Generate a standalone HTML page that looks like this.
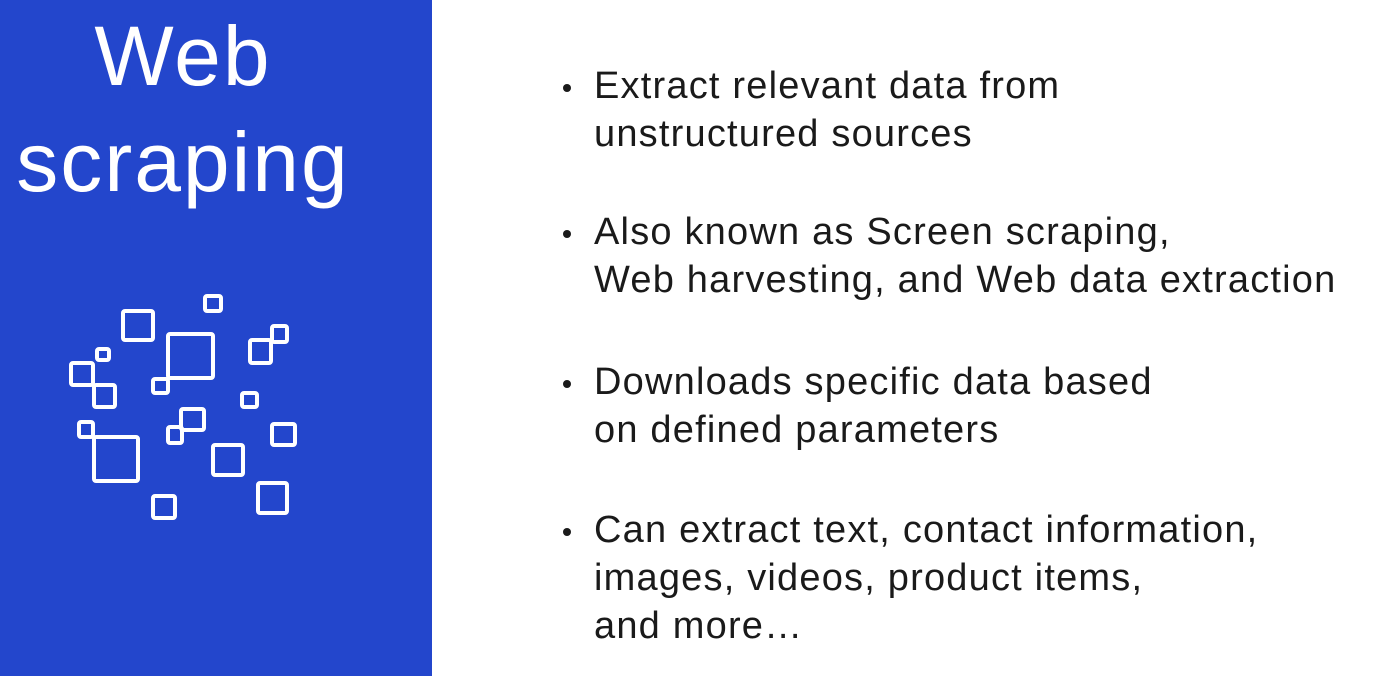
<!DOCTYPE html>
<html><head><style>
body{margin:0;width:1397px;height:676px;background:#fff;position:relative;overflow:hidden;font-family:"Liberation Sans",sans-serif}
#panel{position:absolute;left:0;top:0;width:432px;height:676px;background:#2346cc}
.t{position:absolute;left:0;width:366px;text-align:center;color:#fff;font-size:84px;line-height:84px;letter-spacing:2px}
.b{position:absolute;left:594px;font-size:38px;line-height:48px;letter-spacing:1.2px;color:#1a1a1a;white-space:nowrap}
.b:before{content:"";position:absolute;left:-31px;top:22px;width:8px;height:8px;border-radius:50%;background:#1a1a1a}
</style></head><body>
<div id="panel"></div>
<div class="t" style="top:14px">Web</div>
<div class="t" style="top:120px">scraping</div>
<svg style="position:absolute;left:0;top:0" width="432" height="676" fill="none" stroke="#fff" stroke-width="4" stroke-linejoin="round">
<rect x="205" y="296" width="16" height="15" rx="2"/>
<rect x="123" y="311" width="30" height="29" rx="2"/>
<rect x="168" y="334" width="45" height="44" rx="2"/>
<rect x="153" y="379" width="15" height="14" rx="2"/>
<rect x="272" y="326" width="15" height="16" rx="2"/>
<rect x="250" y="340" width="21" height="23" rx="2"/>
<rect x="97" y="349" width="12" height="11" rx="2"/>
<rect x="71" y="363" width="22" height="22" rx="2"/>
<rect x="94" y="385" width="21" height="22" rx="2"/>
<rect x="242" y="393" width="15" height="14" rx="2"/>
<rect x="168" y="427" width="14" height="16" rx="2"/>
<rect x="181" y="409" width="23" height="21" rx="2"/>
<rect x="272" y="424" width="23" height="21" rx="2"/>
<rect x="79" y="422" width="14" height="15" rx="2"/>
<rect x="94" y="437" width="44" height="44" rx="2"/>
<rect x="213" y="445" width="30" height="30" rx="2"/>
<rect x="258" y="483" width="29" height="30" rx="2"/>
<rect x="153" y="496" width="22" height="22" rx="2"/>
</svg>
<div class="b" style="top:62px">Extract relevant data from<br>unstructured sources</div>
<div class="b" style="top:208px">Also known as Screen scraping,<br>Web harvesting, and Web data extraction</div>
<div class="b" style="top:358px">Downloads specific data based<br>on defined parameters</div>
<div class="b" style="top:506px">Can extract text, contact information,<br>images, videos, product items,<br>and more…</div>
</body></html>
